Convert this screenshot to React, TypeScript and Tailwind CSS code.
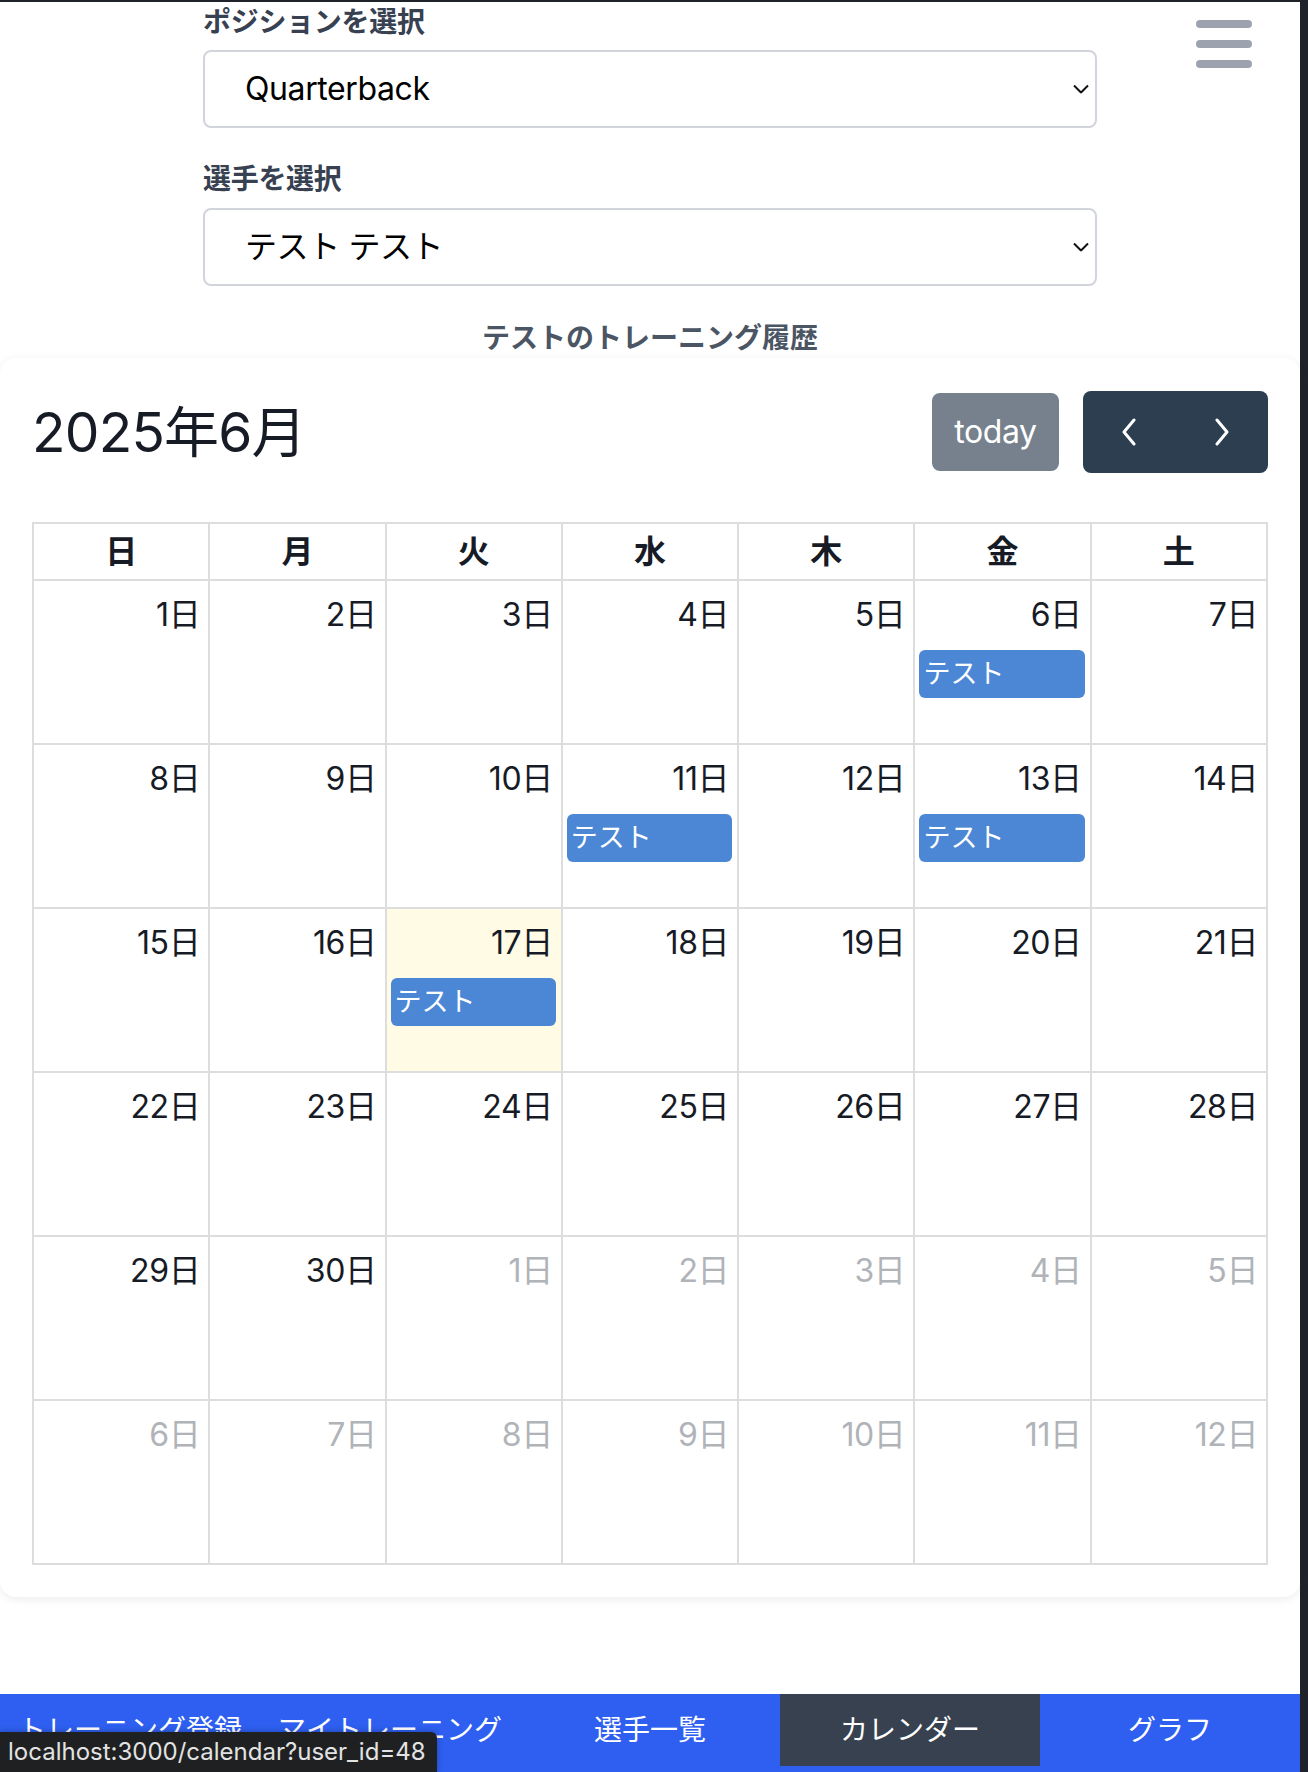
import React from "react";

const FONT = { fontFamily: 'Inter, "Noto Sans CJK JP", sans-serif' };

type Day = { n: number; other?: boolean; today?: boolean; event?: boolean };

const weeks: Day[][] = [
  [{ n: 1 }, { n: 2 }, { n: 3 }, { n: 4 }, { n: 5 }, { n: 6, event: true }, { n: 7 }],
  [{ n: 8 }, { n: 9 }, { n: 10 }, { n: 11, event: true }, { n: 12 }, { n: 13, event: true }, { n: 14 }],
  [{ n: 15 }, { n: 16 }, { n: 17, today: true, event: true }, { n: 18 }, { n: 19 }, { n: 20 }, { n: 21 }],
  [{ n: 22 }, { n: 23 }, { n: 24 }, { n: 25 }, { n: 26 }, { n: 27 }, { n: 28 }],
  [
    { n: 29 },
    { n: 30 },
    { n: 1, other: true },
    { n: 2, other: true },
    { n: 3, other: true },
    { n: 4, other: true },
    { n: 5, other: true },
  ],
  [
    { n: 6, other: true },
    { n: 7, other: true },
    { n: 8, other: true },
    { n: 9, other: true },
    { n: 10, other: true },
    { n: 11, other: true },
    { n: 12, other: true },
  ],
];

const weekdays = ["日", "月", "火", "水", "木", "金", "土"];
const tabs = ["トレーニング登録", "マイトレーニング", "選手一覧", "カレンダー", "グラフ"];

function Chevron() {
  return (
    <svg
      width="16"
      height="9"
      viewBox="0 0 16 9"
      className="pointer-events-none absolute right-[8px] top-1/2 -translate-y-1/2"
    >
      <path d="M1 1 L8 8 L15 1" fill="none" stroke="#111" strokeWidth="2" />
    </svg>
  );
}

function SelectBox({ value }: { value: string }) {
  return (
    <div className="relative">
      <select
        defaultValue={value}
        className="w-full h-[78px] appearance-none bg-white border-2 border-[#d1d5db] rounded-[8px] pl-[40px] text-[32px] tracking-[-0.4px] text-black"
        style={FONT}
      >
        <option>{value}</option>
      </select>
      <Chevron />
    </div>
  );
}

export default function App() {
  return (
    <div className="relative min-h-screen bg-[#1f2329] pt-[2px] pr-[8px] flex" style={FONT}>
      <div className="relative w-full min-h-[1770px] bg-white flex flex-col">
        {/* menu button */}
        <div className="absolute right-[48px] top-[18px] flex flex-col gap-[12px]">
          <span className="block w-[56px] h-[8px] rounded-full bg-[#9ca3af]" />
          <span className="block w-[56px] h-[8px] rounded-full bg-[#9ca3af]" />
          <span className="block w-[56px] h-[8px] rounded-full bg-[#9ca3af]" />
        </div>

        {/* selectors */}
        <div className="mx-auto w-[894px]">
          <label className="block text-[28px] leading-[40px] font-bold text-[#374151] mb-[8px] tracking-[-0.3px]">
            ポジションを選択
          </label>
          <SelectBox value="Quarterback" />
          <label className="block mt-[31px] text-[28px] leading-[40px] font-bold text-[#374151] mb-[9px] tracking-[-0.3px]">
            選手を選択
          </label>
          <SelectBox value="テスト テスト" />
        </div>

        <h2 className="mt-[32px] text-center text-[28px] leading-[40px] font-bold text-[#4b5563]">
          テストのトレーニング履歴
        </h2>

        {/* calendar card */}
        <div className="bg-white rounded-[16px] shadow-[0_2px_10px_rgba(0,0,0,0.08)] px-[32px] pt-[33px] pb-[32px]">
          <div className="flex items-center justify-between h-[82px] mb-[49px]">
            <h1 className="text-[55px] leading-none tracking-[-0.8px] text-[#161b26]">2025年6月</h1>
            <div className="flex items-center gap-[24px]">
              <button className="h-[78px] w-[127px] rounded-[8px] bg-[#76818d] text-white text-[32px] tracking-[-0.4px]">
                today
              </button>
              <div className="flex h-[82px] w-[185px] rounded-[8px] bg-[#2c3e50] overflow-hidden">
                <button className="flex-1 flex items-center justify-center">
                  <svg width="16" height="28" viewBox="0 0 16 28">
                    <path d="M13 2 L3 14 L13 26" fill="none" stroke="white" strokeWidth="3" strokeLinecap="round" strokeLinejoin="round" />
                  </svg>
                </button>
                <button className="flex-1 flex items-center justify-center">
                  <svg width="16" height="28" viewBox="0 0 16 28">
                    <path d="M3 2 L13 14 L3 26" fill="none" stroke="white" strokeWidth="3" strokeLinecap="round" strokeLinejoin="round" />
                  </svg>
                </button>
              </div>
            </div>
          </div>

          <div className="grid grid-cols-7 gap-[2px] bg-[#dddddd] border-2 border-[#dddddd]">
            {weekdays.map((w) => (
              <div key={w} className="bg-white h-[55px] flex items-center justify-center text-[32px] font-bold text-[#161b26]">
                {w}
              </div>
            ))}
            {weeks.flat().map((d, i) => (
              <div
                key={i}
                className={`h-[162px] pt-[10px] ${d.today ? "bg-[#fffbe5]" : "bg-white"}`}
              >
                <div
                  className={`text-right pr-[8px] text-[32px] leading-[48px] tracking-[-0.4px] ${
                    d.other ? "text-[#b0b3b8]" : "text-[#161b26]"
                  }`}
                >
                  {d.n}日
                </div>
                {d.event && (
                  <div className="mt-[11px] ml-[4px] mr-[5px] h-[48px] rounded-[6px] bg-[#4c87d5] text-white text-[27px] leading-[48px] pl-[4px]">
                    テスト
                  </div>
                )}
              </div>
            ))}
          </div>
        </div>

        <div className="flex-1" />

        {/* bottom nav */}
        <nav className="h-[78px] bg-[#2e5ff0] grid grid-cols-5">
          {tabs.map((t) => (
            <div
              key={t}
              className={`h-[72px] flex items-center justify-center text-[28px] text-white ${
                t === "カレンダー" ? "bg-[#384150]" : ""
              }`}
            >
              {t}
            </div>
          ))}
        </nav>
      </div>

      {/* browser status bubble */}
      <div className="absolute left-0 bottom-0 h-[40px] w-[437px] bg-[#1f2021] rounded-tr-[6px] shadow-[0_0_6px_rgba(0,0,0,0.3)] px-[8px] flex items-center text-[24px] text-[#e3e3e3]">
        localhost:3000/calendar?user_id=48
      </div>
    </div>
  );
}
